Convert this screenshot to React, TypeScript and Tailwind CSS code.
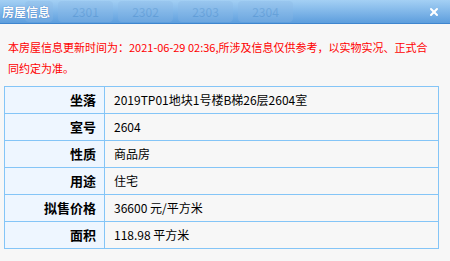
import { X } from 'lucide-react';

const rows: [string, string][] = [
  ["坐落", "2019TP01地块1号楼B梯26层2604室"],
  ["室号", "2604"],
  ["性质", "商品房"],
  ["用途", "住宅"],
  ["拟售价格", "36600 元/平方米"],
  ["面积", "118.98 平方米"],
];

const tabs = ["2301", "2302", "2303", "2304"];

function App() {
  return (
    <div
      className="w-[450px] h-[261px] bg-[#f7f7f7] overflow-hidden"
      style={{ fontFamily: '"Noto Sans CJK SC", "Noto Sans", sans-serif' }}
    >
      {/* title bar */}
      <div className="relative h-6 border-b border-[#3f86cf] bg-gradient-to-b from-[#a4d0f4] to-[#5d9edd]">
        {/* faded tabs behind the title */}
        <div className="flex h-full items-center pl-[25px] gap-[5px] opacity-30">
          <div className="h-[21px] w-[28px] rounded-sm bg-[#8ab8e6]" />
          {tabs.map((t) => (
            <div
              key={t}
              className="flex h-[21px] w-[55px] items-center justify-center rounded-sm bg-[#8ab8e6] text-[12px] text-[#3f7fc0]"
            >
              {t}
            </div>
          ))}
        </div>
        <div className="absolute left-[2px] top-0 flex h-full items-center text-[12px] font-bold text-white [text-shadow:0_0_1px_#2a5fb0]">
          房屋信息
        </div>
        <X className="absolute right-[10px] top-[6px] h-3 w-3 text-white" strokeWidth={4} />
      </div>

      {/* notice */}
      <p className="mt-[13px] pl-2 pr-[22px] text-[11px] leading-[21px] text-[#ff0000]">
        本房屋信息更新时间为：2021-06-29 02:36,所涉及信息仅供参考，以实物实况、正式合同约定为准。
      </p>

      {/* info table */}
      <table className="mt-[7px] ml-1 w-[435px] border-collapse text-black">
        <tbody>
          {rows.map(([k, v]) => (
            <tr key={k} className="h-[27px]">
              <td className="w-[100px] border border-[#84c5f7] bg-[#eef6ff] pr-[8px] text-right text-[13px] font-bold">
                {k}
              </td>
              <td className="border border-[#84c5f7] pl-[9px] text-[12px]">{v}</td>
            </tr>
          ))}
        </tbody>
      </table>
    </div>
  );
}

export default App;
